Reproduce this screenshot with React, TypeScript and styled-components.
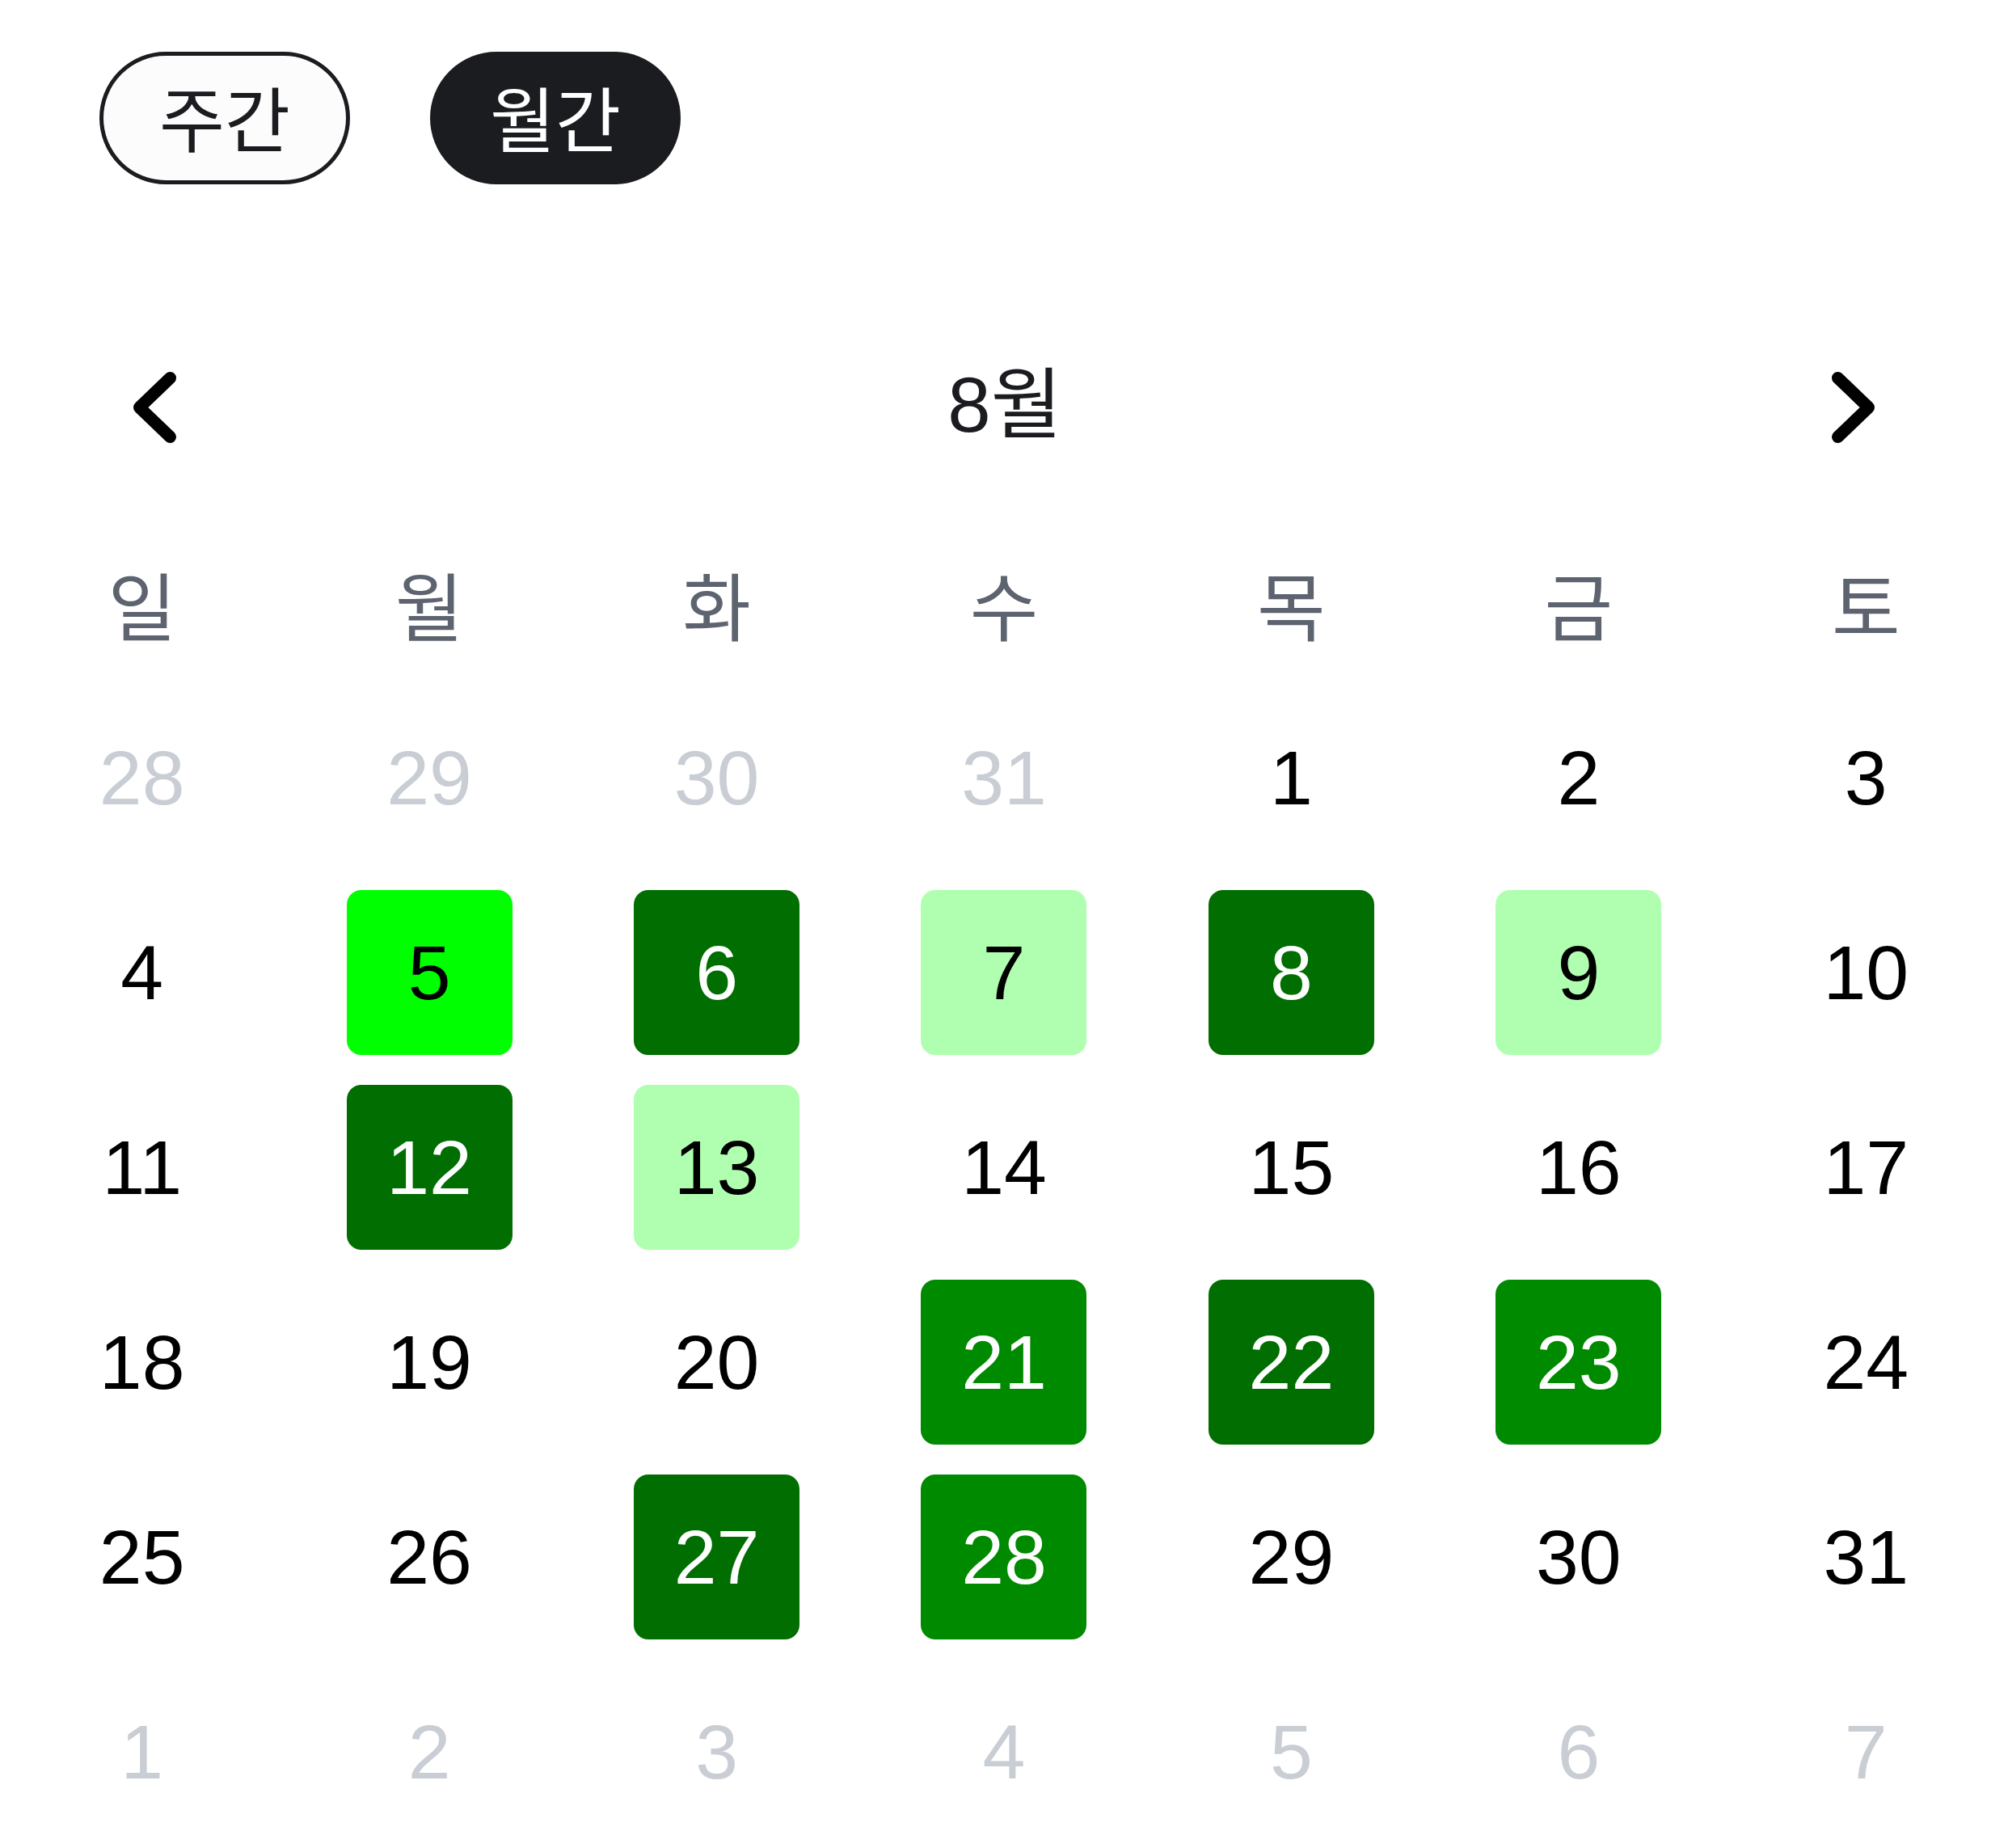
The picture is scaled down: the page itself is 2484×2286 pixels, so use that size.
import React from "react";
import styled, { createGlobalStyle } from "styled-components";

const GlobalStyle = createGlobalStyle`
  html, body {
    margin: 0;
    padding: 0;
    background: #ffffff;
  }
  body {
    font-family: "Liberation Sans", "Noto Sans CJK KR", sans-serif;
  }
`;

const Page = styled.div`
  width: 2484px;
  height: 2286px;
  overflow: hidden;
  box-sizing: border-box;
  padding-top: 64px;
  background: #ffffff;
  font-family: "Liberation Sans", "Noto Sans CJK KR", sans-serif;
`;

const Toggle = styled.div`
  display: flex;
  gap: 99px;
  padding-left: 123px;
`;

const Pill = styled.button<{ $active?: boolean }>`
  height: 164px;
  min-width: 310px;
  padding: 0 50px 6px;
  box-sizing: border-box;
  border-radius: 82px;
  border: 5px solid #1a1c20;
  background: ${(p) => (p.$active ? "#1a1c20" : "#fcfcfc")};
  color: ${(p) => (p.$active ? "#ffffff" : "#1a1c20")};
  font-family: "Noto Sans CJK KR", sans-serif;
  font-size: 88px;
  font-weight: 400;
  line-height: 1;
  display: flex;
  align-items: center;
  justify-content: center;
`;

const Header = styled.div`
  margin-top: 225px;
  height: 100px;
  display: flex;
  align-items: center;
  justify-content: space-between;
  padding: 0 161px 0 163px;
`;

const NavButton = styled.button`
  border: none;
  background: none;
  padding: 0;
  width: 60px;
  height: 92px;
  display: flex;
  align-items: center;
  justify-content: center;
`;

const MonthTitle = styled.div`
  font-family: "Liberation Sans", "Noto Sans CJK KR", sans-serif;
  font-size: 96px;
  color: #1a1c20;
  line-height: 1;
  padding-bottom: 4px;
`;

const Grid = styled.div`
  display: grid;
  grid-template-columns: repeat(7, 1fr);
  width: 2488px;
  margin-left: -2px;
`;

const WeekdayRow = styled(Grid)`
  margin-top: 137px;
  height: 120px;
  align-items: center;
`;

const Weekday = styled.div`
  text-align: center;
  font-family: "Noto Sans CJK KR", sans-serif;
  font-size: 92px;
  line-height: 1;
  color: #5d6470;
  padding-bottom: 8px;
`;

const DaysGrid = styled(Grid)`
  margin-top: 50px;
  grid-auto-rows: 204px;
  row-gap: 37px;
`;

const Cell = styled.div`
  display: flex;
  align-items: center;
  justify-content: center;
`;

const Day = styled.div<{ $bg?: string; $fg: string }>`
  width: 205px;
  height: 204px;
  border-radius: 18px;
  background: ${(p) => p.$bg || "transparent"};
  color: ${(p) => p.$fg};
  font-family: "Liberation Sans", sans-serif;
  font-size: 95px;
  line-height: 1;
  display: flex;
  align-items: center;
  justify-content: center;
  box-sizing: border-box;
`;

const Chevron = ({ dir }: { dir: "left" | "right" }) => (
  <svg width="60" height="92" viewBox="0 0 60 92" fill="none">
    <polyline
      points={
        dir === "left"
          ? "47.5,10.5 9.5,47 47.5,83.5"
          : "10.5,10.5 48.5,47 10.5,83.5"
      }
      stroke="#000"
      strokeWidth="15"
      strokeLinecap="round"
      strokeLinejoin="round"
    />
  </svg>
);

type Level = "bright" | "dark" | "mid" | "light";
const levelBg: Record<Level, string> = {
  bright: "#00ff00",
  dark: "#006e00",
  mid: "#008a00",
  light: "#b0ffb0",
};
const levelFg: Record<Level, string> = {
  bright: "#000000",
  dark: "#ffffff",
  mid: "#ffffff",
  light: "#000000",
};

const activity: Record<number, Level> = {
  5: "bright",
  6: "dark",
  7: "light",
  8: "dark",
  9: "light",
  12: "dark",
  13: "light",
  21: "mid",
  22: "dark",
  23: "mid",
  27: "dark",
  28: "mid",
};

const weekdays = ["일", "월", "화", "수", "목", "금", "토"];

type DayItem = { n: number; current: boolean };
const days: DayItem[] = [
  ...[28, 29, 30, 31].map((n) => ({ n, current: false })),
  ...Array.from({ length: 31 }, (_, i) => ({ n: i + 1, current: true })),
  ...[1, 2, 3, 4, 5, 6, 7].map((n) => ({ n, current: false })),
];

export default function App() {
  return (
    <Page>
      <GlobalStyle />
      <Toggle>
        <Pill>주간</Pill>
        <Pill $active>월간</Pill>
      </Toggle>
      <Header>
        <NavButton aria-label="이전 달">
          <Chevron dir="left" />
        </NavButton>
        <MonthTitle>8월</MonthTitle>
        <NavButton aria-label="다음 달">
          <Chevron dir="right" />
        </NavButton>
      </Header>
      <WeekdayRow>
        {weekdays.map((w) => (
          <Weekday key={w}>{w}</Weekday>
        ))}
      </WeekdayRow>
      <DaysGrid>
        {days.map((d, i) => {
          const lv = d.current ? activity[d.n] : undefined;
          const fg = !d.current ? "#c9cdd4" : lv ? levelFg[lv] : "#000000";
          return (
            <Cell key={i}>
              <Day $bg={lv ? levelBg[lv] : undefined} $fg={fg}>
                {d.n}
              </Day>
            </Cell>
          );
        })}
      </DaysGrid>
    </Page>
  );
}
